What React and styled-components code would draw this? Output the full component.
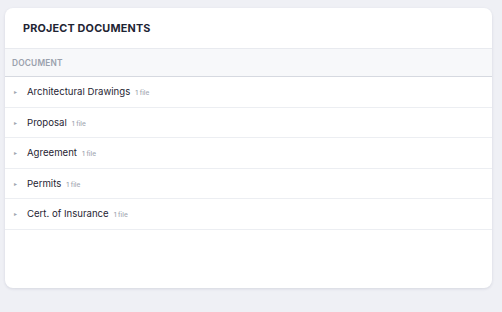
import React from "react";
import styled, { createGlobalStyle } from "styled-components";

const Global = createGlobalStyle`
  html, body { margin: 0; padding: 0; background: #eff0f5; }
  body { font-family: Inter, "Noto Sans", sans-serif; -webkit-font-smoothing: antialiased; }
`;

const Page = styled.div`
  padding: 8px 10px 24px 5px;
`;

const Card = styled.div`
  background: #ffffff;
  border-radius: 8px;
  box-shadow: 0 1px 3px rgba(30, 40, 80, 0.12);
  height: 280px;
  overflow: hidden;
`;

const CardHeader = styled.div`
  height: 40px;
  display: flex;
  align-items: center;
  padding-left: 18px;
`;

const Title = styled.h2`
  margin: 0;
  font-size: 10.8px;
  font-weight: 700;
  letter-spacing: 0.2px;
  color: #1e2433;
  text-transform: uppercase;
`;

const TableHead = styled.div`
  height: 27px;
  display: flex;
  align-items: center;
  padding-left: 7px;
  background: #f7f8fa;
  border-top: 1px solid #e8eaef;
  border-bottom: 1px solid #d6d9e0;
  font-size: 8.3px;
  font-weight: 600;
  letter-spacing: 0.2px;
  color: #9aa1ad;
  text-transform: uppercase;
`;

const Row = styled.div`
  height: 29.5px;
  display: flex;
  align-items: center;
  padding-left: 9px;
  border-bottom: 1px solid #eceef2;
`;

const Caret = styled.span`
  width: 13px;
  font-size: 6px;
  color: #a0a6b0;
  display: inline-flex;
  align-items: center;
`;

const Label = styled.span`
  display: inline-flex;
  align-items: baseline;
`;

const Name = styled.span`
  font-size: 9.6px;
  font-weight: 400;
  color: #1f2533;
`;

const Count = styled.span`
  margin-left: 5px;
  font-size: 6.5px;
  color: #a3a8b2;
  font-weight: 500;
`;

const docs = [
  "Architectural Drawings",
  "Proposal",
  "Agreement",
  "Permits",
  "Cert. of Insurance",
];

export default function App() {
  return (
    <>
      <Global />
      <Page>
        <Card>
          <CardHeader>
            <Title>Project Documents</Title>
          </CardHeader>
          <TableHead>Document</TableHead>
          {docs.map((d) => (
            <Row key={d}>
              <Caret>▸</Caret>
              <Label>
                <Name>{d}</Name>
                <Count>1 file</Count>
              </Label>
            </Row>
          ))}
        </Card>
      </Page>
    </>
  );
}
